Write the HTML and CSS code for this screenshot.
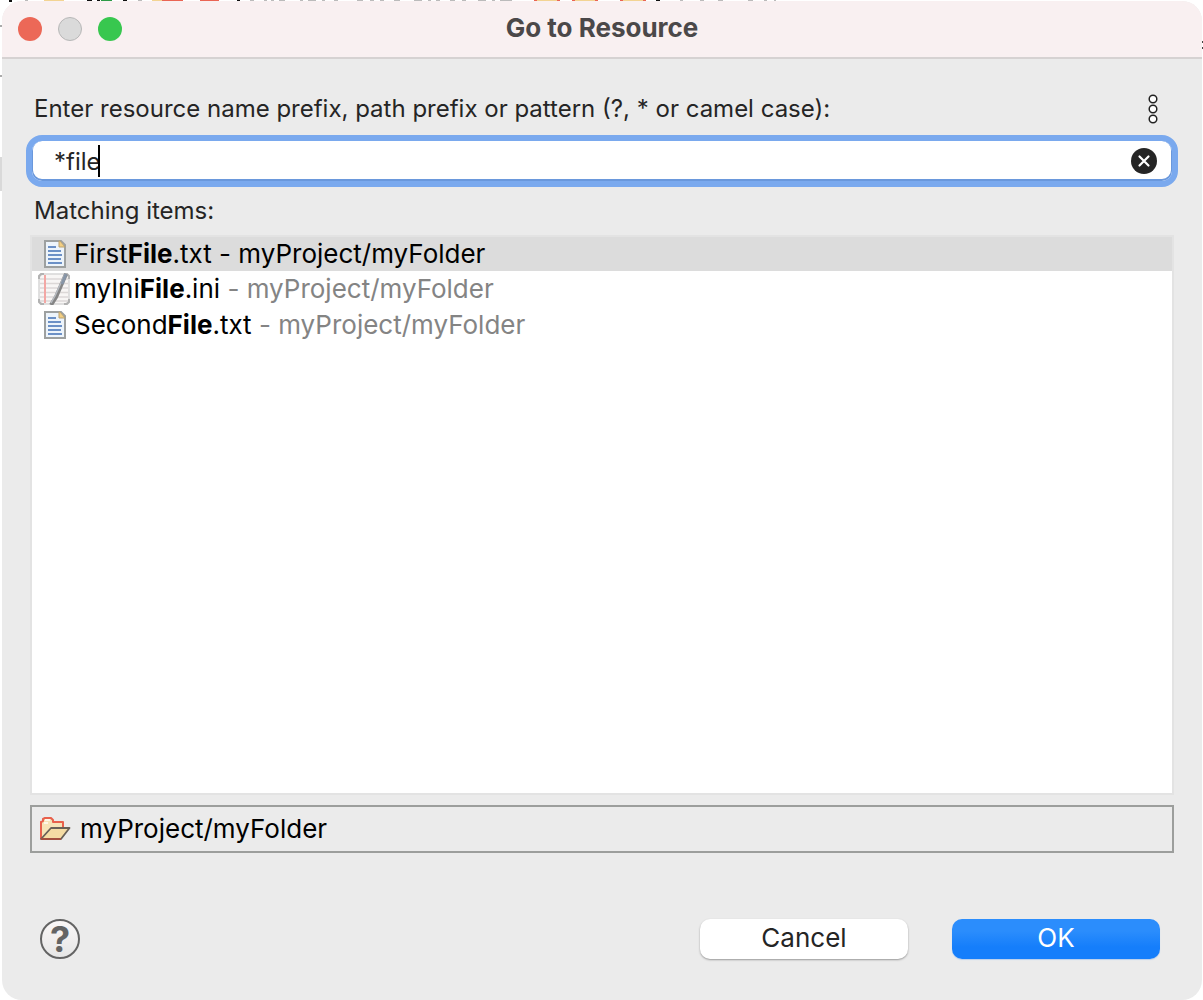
FILE: index.html
```html
<!DOCTYPE html>
<html lang="en">
<head>
<meta charset="utf-8">
<title>Go to Resource</title>
<link rel="stylesheet" href="styles.css">
</head>
<body>
<svg class="backdrop" width="1203" height="200" aria-hidden="true">
  <path d="M9 0h3v2h-3zM87 0h5v1h-5zM97 0h3v1h-3zM123 0h4v1h-4zM237 0h3v1h-3zM656 0h4v1h-4z" fill="#111"/>
  <path d="M44 0h20v1h-20zM152 0h10v1h-10zM536 0h22v1h-22zM574 0h22v1h-22zM622 0h22v1h-22z" fill="#f3d493"/>
  <path d="M162 0h21v1h-21zM200 0h19v1h-19zM534 0h3v1h-3zM557 0h3v1h-3zM572 0h3v1h-3zM595 0h3v1h-3zM620 0h3v1h-3zM643 0h3v1h-3z" fill="#ea6554"/>
  <path d="M101 0h11v1h-11z" fill="#2c9a46"/>
  <path d="M25 0h3v1h-3zM138 0h4v1h-4zM250 0h4v1h-4zM264 0h3v1h-3zM271 0h3v1h-3zM279 0h6v1h-6zM300 0h3v1h-3zM308 0h8v1h-8zM322 0h3v1h-3zM334 0h4v1h-4zM357 0h6v1h-6zM370 0h4v1h-4zM380 0h4v1h-4zM394 0h6v1h-6zM414 0h8v1h-8zM428 0h3v1h-3zM436 0h4v1h-4zM450 0h5v1h-5zM462 0h4v1h-4zM478 0h8v1h-8zM492 0h3v1h-3zM500 0h12v1h-12zM680 0h3v1h-3zM700 0h4v1h-4zM718 0h5v1h-5zM748 0h5v1h-5zM764 0h3v1h-3zM774 0h2v1h-2z" fill="#bbb"/>
  <path d="M0 25h2v2h-2zM0 75h2v2h-2z" fill="#aaa"/>
  <path d="M0 157h2v34h-2z" fill="#d9d9d9"/>
  <path d="M1202 41h1v2h-1zM1202 47h1v2h-1z" fill="#444"/>
</svg>
<main class="dialog">
  <header class="titlebar">
    <div class="lights">
      <button class="light close" type="button" aria-label="Close"></button>
      <button class="light minimize" type="button" aria-label="Minimize" disabled></button>
      <button class="light zoom" type="button" aria-label="Zoom"></button>
    </div>
    <h1 class="title">Go to Resource</h1>
  </header>
  <form class="content">
    <div class="prompt">
      <label for="pattern">Enter resource name prefix, path prefix or pattern (?, * or camel case):</label>
      <button class="menu" type="button" aria-label="View menu">
        <svg width="12" height="32" viewBox="0 0 12 32" fill="#fff" stroke="#222" stroke-width="1.500"><circle cx="6" cy="6" r="3.800"/><circle cx="6" cy="16" r="3.800"/><circle cx="6" cy="26" r="3.800"/></svg>
      </button>
    </div>
    <div class="search">
      <input class="pattern" id="pattern" type="text" value="*file" autocomplete="off">
      <span class="caret"></span>
      <button class="clear" type="button" aria-label="Clear">
        <svg width="26" height="26" viewBox="0 0 26 26"><circle cx="13" cy="13" r="13" fill="#252525"/><path d="M8.500 8.500l9 9M17.500 8.500l-9 9" stroke="#fff" stroke-width="2.200" stroke-linecap="round"/></svg>
      </button>
    </div>
    <h2 class="list-label" id="items-label">Matching items:</h2>
    <ul class="items" aria-labelledby="items-label">
      <li class="item selected">
        <svg class="icon" width="32" height="32" viewBox="0 0 32 32"><use href="#text-file"/></svg>
        <span>First<b>File</b>.txt <span class="path">- myProject/myFolder</span></span>
      </li>
      <li class="item">
        <svg class="icon" width="32" height="32" viewBox="0 0 32 32">
          <rect x="1" y="1" width="30" height="30" rx="5" fill="#f8f6f5" stroke="#d6d6d6" stroke-width="1.500"/>
          <path d="M2 6h28M2 10.500h28M2 15h28M2 19.500h28M2 24h28M2 28h28" stroke="#dcd8d7" stroke-width="1.300"/>
          <path d="M7 2v28" stroke="#f3a7a4" stroke-width="2"/>
          <path d="M1 6V3l2-2h3M26 1h3l2 2v3M1 26v3l2 2h3M26 31h3l2-2v-3" fill="none" stroke="#b2b2b2" stroke-width="2"/>
          <path d="M28 1L18 24l-5 8" fill="none" stroke="#858585" stroke-width="4"/>
          <path d="M27 1L17 23l-4 7" fill="none" stroke="#b8bcc2" stroke-width="1.500"/>
          <path d="M28 1l-4 10" stroke="#8795a7" stroke-width="3"/>
        </svg>
        <span>myIni<b>File</b>.ini <span class="path">- myProject/myFolder</span></span>
      </li>
      <li class="item">
        <svg class="icon" width="32" height="32" viewBox="0 0 32 32"><use href="#text-file"/></svg>
        <span>Second<b>File</b>.txt <span class="path">- myProject/myFolder</span></span>
      </li>
    </ul>
    <div class="status">
      <svg width="32" height="28" viewBox="0 0 32 28" stroke-linejoin="round">
        <path d="M2 24V7l2-1V4l2-1h6l2 2v2h10v6" fill="#f7e4b8" stroke="#e8604c" stroke-width="2"/>
        <path d="M5 8h4M6 5h5" stroke="#fff7e8" stroke-width="2"/>
        <path d="M2 24l10-11h18.500L22 24z" fill="#f5dca4" stroke="#696057" stroke-width="1.800"/>
        <path d="M2 24h20" stroke="#a3503f" stroke-width="2"/>
      </svg>
      <span>myProject/myFolder</span>
    </div>
    <footer class="actions">
      <button class="help" type="button" aria-label="Help">?</button>
      <button class="button cancel" type="button">Cancel</button>
      <button class="button ok" type="submit">OK</button>
    </footer>
  </form>
</main>
<svg width="0" height="0" class="symbols" aria-hidden="true">
  <symbol id="text-file" viewBox="0 0 32 32">
    <path d="M7 3h16l4 4v22H7z" fill="#edf4fb" stroke="#9da0a0" stroke-width="2"/>
    <path d="M21 3v6h6l-5-6z" fill="#f4cf82" stroke="#b9a273"/>
    <path d="M10 9h8M10 13h13M10 17h14M10 21h13M10 25h14" stroke="#6b90c6" stroke-width="2"/>
  </symbol>
</svg>
</body>
</html>
```
FILE: styles.css
```css
* { box-sizing: border-box; }
body {
  margin: 0;
  min-height: 100vh;
  display: flex;
  flex-direction: column;
  background: #fff;
  color: #000;
  font: 24px/30px Inter, "Liberation Sans", sans-serif;
}
button { padding: 0; border: 0; background: none; font: inherit; }
svg { display: block; flex: none; }
.backdrop { position: absolute; top: 0; left: 0; max-width: 100%; }
.symbols { position: absolute; }
.dialog {
  position: relative;
  flex: 1;
  display: flex;
  flex-direction: column;
  margin: 1px 1px 0 2px;
  border-radius: 20px;
  overflow: hidden;
  background: #ebebeb;
}
.titlebar {
  display: grid;
  grid-template-columns: 1fr auto 1fr;
  align-items: center;
  height: 58px;
  padding: 0 16px;
  background: #f9f0f1;
  border-bottom: 2px solid #d6d2d2;
  border-bottom-width: 2px;
}
.lights { display: flex; gap: 16px; }
.light { width: 24px; height: 24px; border-radius: 50%; }
.close { background: #ec6857; }
.minimize { background: #dadada; border: 1px solid #b7b7b7; }
.zoom { background: #38c74f; }
.title { margin: 0; font-size: 26px; line-height: 30px; font-weight: 700; color: #4b4849; padding-bottom: 2px; }
.content { flex: 1; display: flex; flex-direction: column; padding: 32px 28px 41px; }
.prompt { display: flex; justify-content: space-between; align-items: center; height: 36px; padding: 0 15px 0 4px; color: #252525; }
.menu { width: 12px; height: 32px; padding-bottom: 2px; }
.search {
  position: relative;
  display: flex;
  align-items: center;
  height: 52px;
  margin: 8px -4px 0;
  padding: 0 15px 0 22px;
  background: #fff;
  border: 6px solid #7aa9ee;
  border-radius: 16px;
  box-shadow: inset 0 -1px 0 1px #6a98dc;
}
.pattern { flex: 1; min-width: 0; padding: 2px 0 0; border: 0; outline: 0; background: none; font: inherit; color: #252525; }
.caret { position: absolute; left: 66px; top: 4px; width: 2px; height: 32px; background: #000; }
.clear { width: 26px; height: 26px; }
.list-label { margin: 9px 4px; font-size: 24px; line-height: 30px; font-weight: 400; color: #252525; }
.items {
  flex: 1;
  margin: 0;
  padding: 0;
  list-style: none;
  background: #fff;
  border: 2px solid #e3e3e3;
  font-size: 26px;
}
.item { display: flex; align-items: center; gap: 4px; height: 36px; padding-left: 6px; white-space: nowrap; }
.selected { height: 34px; background: #dcdcdc; }
.path { color: #848484; }
.selected .path { color: #000; }
.status {
  display: flex;
  align-items: center;
  gap: 9px;
  height: 48px;
  margin-top: 10px;
  padding-left: 7px;
  border: 2px solid #9c9e9c;
  font-size: 26px;
}
.actions { display: flex; align-items: center; margin-top: 66px; padding: 0 14px 0 10px; }
.help {
  width: 40px;
  height: 40px;
  margin-right: auto;
  border: 2px solid #646464;
  border-radius: 50%;
  background: linear-gradient(#faf7f7, #e6e6e6);
  color: #646464;
  font-size: 36px;
  line-height: 36px;
  font-weight: 700;
}
.button { width: 208px; height: 40px; padding-bottom: 2px; border-radius: 10px; font-size: 26px; line-height: 38px; }
.cancel { margin-right: 44px; background: #fff; color: #252525; box-shadow: 0 1px 2px #999; }
.ok { background: linear-gradient(#2b8dfc 30%, #157efb 70%); color: #fff; box-shadow: 0 1px 1px #b8cfee; }
```
